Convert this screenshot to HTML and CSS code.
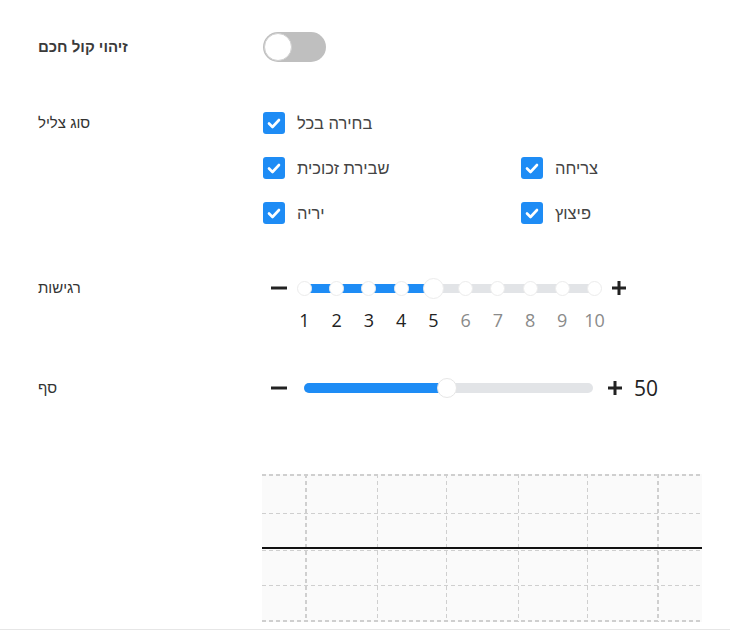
FILE: index.html
```html
<!DOCTYPE html>
<html lang="he">
<head>
  <meta charset="UTF-8" />
  <meta name="viewport" content="width=device-width, initial-scale=1.0"/>
  <title>הגדרות זיהוי קול</title>
  <link rel="stylesheet" href="styles.css">
</head>
<body>

  <div class="page">

    <div class="row">
      <div class="row-label label-toggle strong">זיהוי קול חכם</div>
      <div class="row-control">
        <div class="switch"><span class="knob"></span></div>
      </div>
    </div>

    <div class="row row-sounds">
      <div class="row-label label-check">סוג צליל</div>
      <div class="row-control">
        <div class="check-grid">
          <label class="check full"><span class="box"><svg viewBox="0 0 22 22"><path d="M6 11.5l3.5 3.5 6.5-7"/></svg></span>בחירה בכל</label>
          <label class="check"><span class="box"><svg viewBox="0 0 22 22"><path d="M6 11.5l3.5 3.5 6.5-7"/></svg></span>שבירת זכוכית</label>
          <label class="check"><span class="box"><svg viewBox="0 0 22 22"><path d="M6 11.5l3.5 3.5 6.5-7"/></svg></span>צריחה</label>
          <label class="check"><span class="box"><svg viewBox="0 0 22 22"><path d="M6 11.5l3.5 3.5 6.5-7"/></svg></span>יריה</label>
          <label class="check"><span class="box"><svg viewBox="0 0 22 22"><path d="M6 11.5l3.5 3.5 6.5-7"/></svg></span>פיצוץ</label>
        </div>
      </div>
    </div>

    <div class="row row-sensitivity">
      <div class="row-label label-slider">רגישות</div>
      <div class="row-control">
        <div class="slider">
          <span class="step-btn"><svg viewBox="0 0 24 24"><path d="M4 12h16"/></svg></span>
          <div class="steps">
            <div class="steps-fill" style="width: 136px"></div>
            <span class="dot"></span>
            <span class="dot"></span>
            <span class="dot"></span>
            <span class="dot"></span>
            <span class="dot current"></span>
            <span class="dot"></span>
            <span class="dot"></span>
            <span class="dot"></span>
            <span class="dot"></span>
            <span class="dot"></span>
          </div>
          <span class="step-btn plus"><svg viewBox="0 0 24 24"><path d="M5 12h14M12 5v14"/></svg></span>
        </div>
        <div class="step-numbers">
          <span class="on">1</span>
          <span class="on">2</span>
          <span class="on">3</span>
          <span class="on">4</span>
          <span class="on">5</span>
          <span>6</span>
          <span>7</span>
          <span>8</span>
          <span>9</span>
          <span>10</span>
        </div>
      </div>
    </div>

    <div class="row row-threshold">
      <div class="row-label label-slider">סף</div>
      <div class="row-control">
        <div class="slider">
          <span class="step-btn"><svg viewBox="0 0 24 24"><path d="M4 12h16"/></svg></span>
          <div class="range">
            <div class="range-fill" style="width: 143px"></div>
            <span class="range-handle" style="left: 143px"></span>
          </div>
          <span class="step-btn plus"><svg viewBox="0 0 24 24"><path d="M5 12h14M12 5v14"/></svg></span>
          <span class="range-value">50</span>
        </div>
      </div>
    </div>

    <div class="row row-chart">
      <div class="row-label"></div>
      <div class="row-control">
        <svg class="chart" width="440" height="148" viewBox="0 0 440 148">
          <rect x="0" y="0" width="440" height="148" fill="#fafafa"/>
          <g stroke="#cfcfcf" stroke-dasharray="4 3" fill="none">
            <path d="M0 39.5h440M0 111.5h440" stroke-width="1"/>
            <path d="M0 76.5h440" stroke-width="1"/>
            <path d="M0 1h440M0 147h440" stroke-width="2"/>
            <path d="M115.5 0v148M184.5 0v148M256.5 0v148M325.5 0v148" stroke-width="1"/>
            <path d="M44 0v148M396 0v148" stroke-width="2"/>
          </g>
          <path d="M0 74h440" stroke="#111" stroke-width="2"/>
        </svg>
      </div>
    </div>

  </div>

</body>
</html>
```

FILE: styles.css
```css
body {
  margin: 0;
  background: #fff;
  color: #333;
  font-family: 'Liberation Sans', Arial, sans-serif;
}
.page {
  height: 597px;
  padding: 32px 0 0 38px;
  border-bottom: 1px solid #e6e6e6;
}
.row {
  display: flex;
  align-items: flex-start;
}
.row-label {
  width: 225px;
  flex-shrink: 0;
  font-size: 15px;
  color: #333;
}
.row-label.strong {
  font-weight: bold;
  color: #3a3a3a;
}
.label-toggle { line-height: 30px; }
.label-check { line-height: 22px; }
.label-slider { line-height: 24px; }
.row-control {
  flex: 1;
}

/* switch */
.switch {
  width: 63px;
  height: 30px;
  border-radius: 15px;
  background: #bfbfbf;
  padding: 1px;
  box-sizing: border-box;
}
.switch .knob {
  display: block;
  width: 28px;
  height: 28px;
  border-radius: 50%;
  background: #fff;
  box-sizing: border-box;
  border: 1px solid #d0d0d0;
}

/* checkboxes */
.row-sounds {
  margin-top: 50px;
}
.check-grid {
  display: grid;
  grid-template-columns: 258px 1fr;
  row-gap: 23px;
}
.check.full {
  grid-column: 1 / 3;
}
.check {
  display: flex;
  align-items: center;
  gap: 12px;
  height: 22px;
  font-size: 16.5px;
  color: #444;
}
.check .box {
  width: 22px;
  height: 22px;
  border-radius: 3px;
  background: #1e8cf5;
  display: flex;
}
.check .box svg {
  width: 22px;
  height: 22px;
  fill: none;
  stroke: #fff;
  stroke-width: 2.6;
  stroke-linecap: round;
  stroke-linejoin: round;
}

/* sliders */
.row-sensitivity {
  margin-top: 52px;
}
.row-threshold {
  margin-top: 44px;
}
.slider {
  display: flex;
  align-items: center;
  height: 24px;
}
.step-btn {
  width: 24px;
  height: 24px;
  margin-left: 4px;
  display: flex;
}
.step-btn svg {
  width: 24px;
  height: 24px;
  fill: none;
  stroke: #222;
  stroke-width: 3;
}
.step-btn.plus {
  margin-left: 5px;
}
.steps {
  position: relative;
  display: flex;
  justify-content: space-between;
  align-items: center;
  width: 305px;
  margin-left: 6px;
}
.steps::before {
  content: "";
  position: absolute;
  left: 7px;
  right: 7px;
  top: 50%;
  height: 9px;
  margin-top: -4.5px;
  background: #e2e4e7;
}
.steps-fill {
  position: absolute;
  left: 7px;
  top: 50%;
  height: 9px;
  margin-top: -4.5px;
  background: #1e8cf5;
}
.dot {
  position: relative;
  width: 15px;
  height: 15px;
  border-radius: 50%;
  background: #fff;
  box-sizing: border-box;
  border: 1px solid #ececec;
}
.dot.current {
  width: 21px;
  height: 21px;
  margin: 0 -3px;
}
.step-numbers {
  display: flex;
  justify-content: space-between;
  width: 305px;
  margin: 8px 0 0 34px;
  font-family: 'Open Sans', 'Noto Sans', sans-serif;
  font-size: 18px;
  line-height: 24px;
  color: #8a8a8a;
}
.step-numbers span {
  width: 15px;
  display: flex;
  justify-content: center;
}
.step-numbers span.on {
  color: #222;
}
.range {
  position: relative;
  width: 289px;
  height: 10px;
  border-radius: 5px;
  background: #e2e4e7;
  margin-left: 13px;
  margin-right: 5px;
}
.range-fill {
  height: 10px;
  border-radius: 5px;
  background: #1e8cf5;
}
.range-handle {
  position: absolute;
  top: -5px;
  width: 20px;
  height: 20px;
  margin-left: -10px;
  border-radius: 50%;
  background: #fff;
  box-sizing: border-box;
  border: 1px solid #e6e6e6;
}
.range-value {
  margin-left: 7px;
  font-family: 'Open Sans', 'Noto Sans', sans-serif;
  font-size: 21px;
  color: #222;
}

/* chart */
.row-chart {
  margin-top: 74px;
}
.chart {
  display: block;
  margin-left: -1px;
}
```
